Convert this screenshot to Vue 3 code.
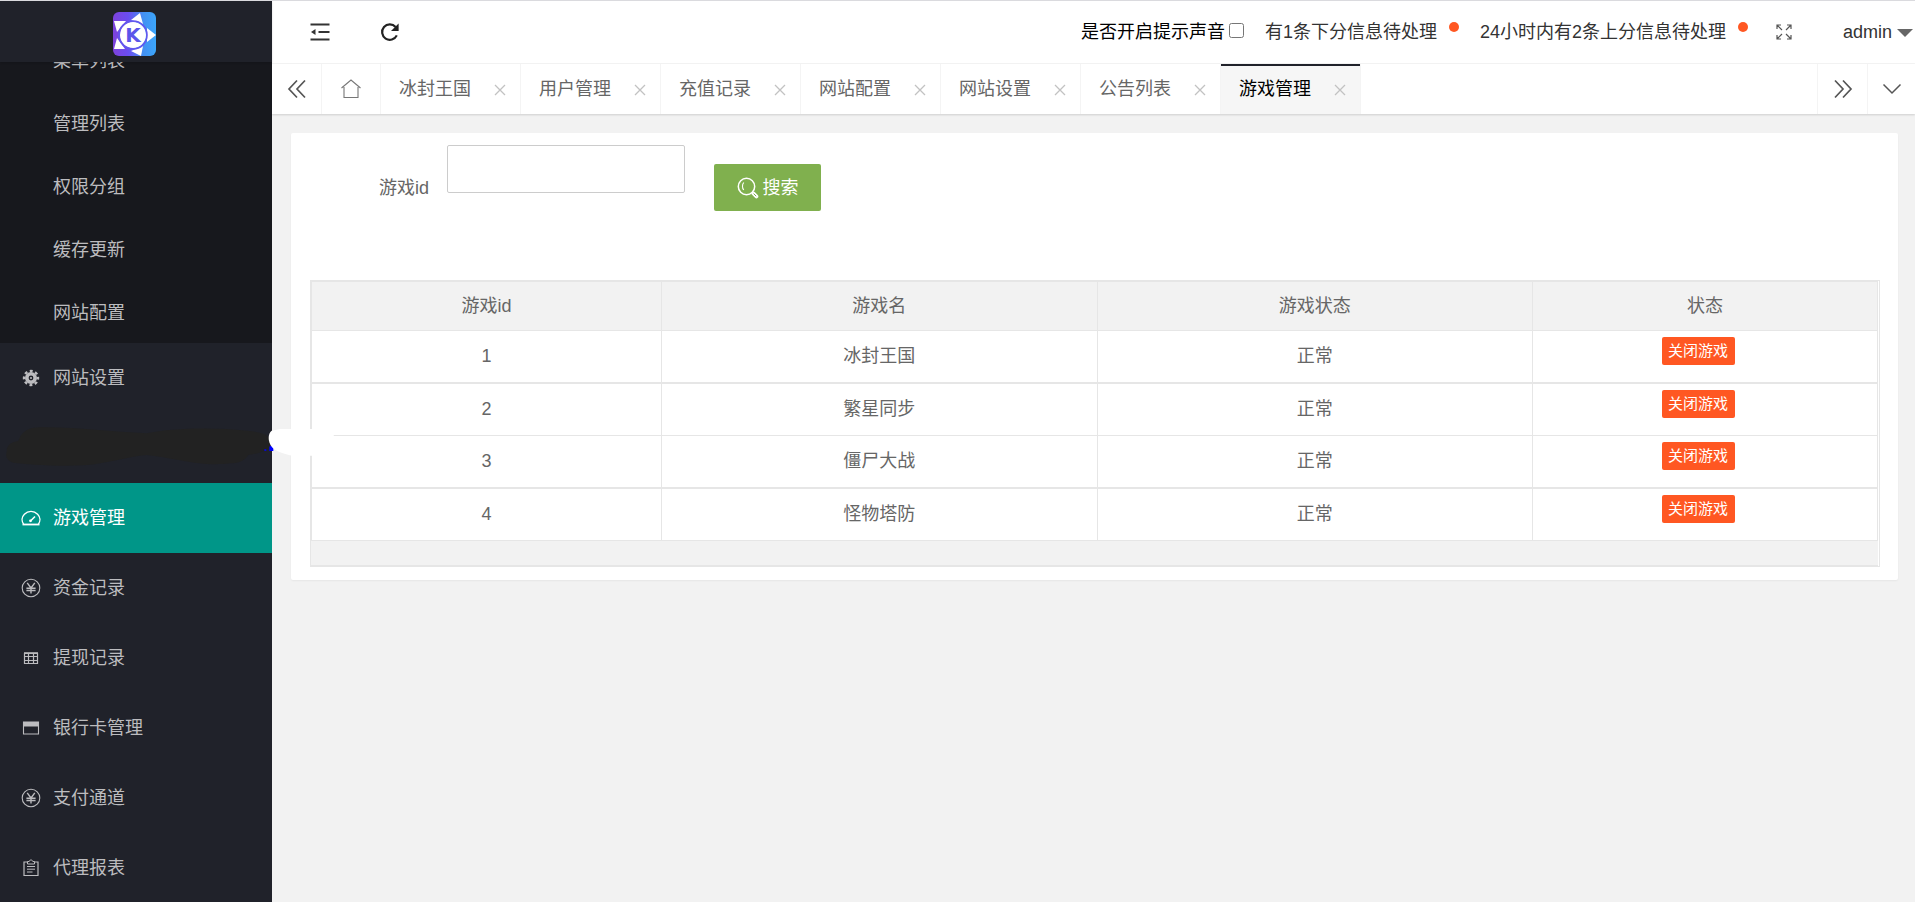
<script setup>
import { ref } from 'vue'

const subItems = ['菜单列表', '管理列表', '权限分组', '缓存更新', '网站配置']

const navItems = [
  { label: '网站设置', icon: 'gear' },
  { label: '', icon: 'blank' },
  { label: '游戏管理', icon: 'gauge', active: true },
  { label: '资金记录', icon: 'yen' },
  { label: '提现记录', icon: 'grid' },
  { label: '银行卡管理', icon: 'card' },
  { label: '支付通道', icon: 'yen' },
  { label: '代理报表', icon: 'clipboard' },
]

const tabs = ['冰封王国', '用户管理', '充值记录', '网站配置', '网站设置', '公告列表', '游戏管理']
const activeTab = ref('游戏管理')

const games = [
  { id: 1, name: '冰封王国', state: '正常' },
  { id: 2, name: '繁星同步', state: '正常' },
  { id: 3, name: '僵尸大战', state: '正常' },
  { id: 4, name: '怪物塔防', state: '正常' },
]

const sound = ref(false)
const gameId = ref('')
</script>

<template>
  <div class="layout">
    <aside class="side">
      <div class="logo">
        <svg width="43" height="44" viewBox="0 0 43 44" aria-hidden="true">
          <defs>
            <linearGradient id="logoFill" x1="0" y1="0" x2="1" y2="0">
              <stop offset="0" stop-color="#7d42dc" />
              <stop offset="0.35" stop-color="#6b4df0" />
              <stop offset="0.7" stop-color="#4390f2" />
              <stop offset="1" stop-color="#3ba6fa" />
            </linearGradient>
          </defs>
          <rect width="43" height="44" rx="6" fill="url(#logoFill)" />
          <g fill="#fff">
            <circle cx="20" cy="23" r="13" />
            <path d="M27 1L30 12L18 8Z" />
            <path d="M43 23L34 30V16Z" />
            <path d="M28 44L18 39L30 34Z" />
            <path d="M1 9L13 9L4 20Z" />
            <path d="M1 37L4 26L12 37Z" />
          </g>
          <circle cx="20" cy="23" r="14" fill="none" stroke="#6257ee" stroke-width="1.6" />
          <text x="20" y="30" text-anchor="middle" class="logo-letter">K</text>
        </svg>
      </div>
      <nav class="nav">
        <ul class="sub">
          <li v-for="item in subItems" :key="item"><a href="#">{{ item }}</a></li>
        </ul>
        <ul class="menu">
          <li v-for="(item, i) in navItems" :key="i" :class="{ active: item.active }">
            <svg v-if="item.icon === 'blank'" class="scribble" width="340" height="43" viewBox="0 255 1020 129" aria-hidden="true">
              <path fill="#222" d="M20 335C20 315 35 305 55 303C62 280 80 262 120 262C220 260 330 275 440 280C520 262 650 262 740 272C780 275 808 285 812 300C818 325 790 338 745 345C735 360 720 370 690 370C600 380 560 360 440 345C380 350 330 370 250 376C160 380 80 372 40 368C20 362 16 350 20 335Z" />
              <path fill="#00f" d="M793 328h6v4h-6zM808 320l6-4 6 8v9h-12z" />
              <path fill="#fff" d="M840 267H985C1010 275 1010 330 985 347H880C850 343 825 332 815 320C803 305 803 280 815 272Z" />
            </svg>
            <a v-else href="#">
              <svg class="ico" width="20" height="20" viewBox="0 0 20 20" fill="none" stroke="currentColor" aria-hidden="true">
                <template v-if="item.icon === 'gear'">
                  <circle cx="10" cy="10" r="4.2" stroke-width="3.6" />
                  <circle cx="10" cy="10" r="7" stroke-width="2.4" stroke-dasharray="2.9 2.6" stroke-dashoffset="1.45" />
                  <circle cx="10" cy="10" r="1" fill="currentColor" stroke="none" />
                </template>
                <template v-else-if="item.icon === 'gauge'">
                  <path stroke-width="1.4" d="M2.6 16C0.4 13 0.6 9 3.4 6.2A9.2 9.2 0 0 1 16.6 6.2C19.4 9 19.6 13 17.4 16" />
                  <path stroke-width="1.8" d="M1.5 16.5H18.5" />
                  <path stroke-width="1.6" d="M9.5 13L14 8.5" />
                  <circle cx="9.5" cy="12.8" r="1.4" fill="currentColor" stroke="none" />
                </template>
                <template v-else-if="item.icon === 'yen'">
                  <circle cx="10" cy="10" r="8.8" stroke-width="1.1" />
                  <path stroke-width="1.4" d="M6.2 4.8L10 10L13.8 4.8M10 10V15.6M5.4 10.2H14.6M5.4 12.5H14.6" />
                </template>
                <template v-else-if="item.icon === 'grid'">
                  <path stroke-width="1.2" d="M3.5 5.5H16.5V15.5H3.5ZM3.5 8.5H16.5M3.5 12.5H16.5M7.5 5.5V15.5M12.5 5.5V15.5" />
                  <path stroke-width="1.6" d="M3 5H17" />
                </template>
                <template v-else-if="item.icon === 'card'">
                  <path stroke-width="1.1" d="M2.5 4H17.5V16H2.5Z" />
                  <path fill="currentColor" stroke="none" d="M2 4H18V8.5H2Z" />
                </template>
                <template v-else>
                  <path stroke-width="1.2" d="M6.5 4H3V17.5H17V4H13.5" />
                  <path stroke-width="1" d="M6.5 3.5H8.2C8.4 1.5 11.6 1.5 11.8 3.5H13.5V6H6.5ZM6 8.5H14M6 11.2H14M6 14H11.5" />
                </template>
              </svg>
              <span>{{ item.label }}</span>
            </a>
          </li>
        </ul>
      </nav>
    </aside>

    <div class="main">
      <header class="top">
        <button class="plain" type="button" aria-label="收起菜单">
          <svg width="20" height="20" viewBox="0 0 20 20" fill="none" stroke="#333" stroke-width="2" aria-hidden="true">
            <path d="M0.5 2.5H19.5M8.5 10H19.5M0.5 17.5H19.5" />
            <path fill="#333" stroke="none" d="M1 10L5.5 7V13Z" />
          </svg>
        </button>
        <button class="plain" type="button" aria-label="刷新">
          <svg width="20" height="20" viewBox="0 0 20 20" fill="none" stroke="#222" stroke-width="2.2" aria-hidden="true">
            <path d="M16.8 13.4A7.7 7.7 0 1 1 15.6 5" />
            <path fill="#222" stroke="none" d="M18.6 1.4V9H11Z" />
          </svg>
        </button>
        <div class="top-right">
          <label class="sound">是否开启提示声音<input v-model="sound" type="checkbox" /></label>
          <a href="#" class="notice">有1条下分信息待处理<i class="dot"></i></a>
          <a href="#" class="notice">24小时内有2条上分信息待处理<i class="dot"></i></a>
          <button class="plain full" type="button" aria-label="全屏">
            <svg width="16" height="16" viewBox="0 0 16 16" fill="none" stroke="#555" stroke-width="1.2" aria-hidden="true">
              <path d="M1 5V1H5M1 1L6 6M11 1H15V5M15 1L10 6M1 11V15H5M1 15L6 10M15 11V15H11M15 15L10 10" />
            </svg>
          </button>
          <a href="#" class="user">admin<i class="caret"></i></a>
        </div>
      </header>

      <div class="tabs">
        <button class="ctl" type="button" aria-label="向左">
          <svg width="20" height="20" viewBox="0 0 20 20" fill="none" stroke="#555" stroke-width="1.7" aria-hidden="true">
            <path d="M10 1.5L2 10L10 18.5M18 1.5L10 10L18 18.5" />
          </svg>
        </button>
        <button class="ctl home" type="button" aria-label="主页">
          <svg width="20" height="20" viewBox="0 0 20 20" fill="none" stroke="#777" stroke-width="1.1" aria-hidden="true">
            <path d="M0.5 9L10 1L19.5 9M3 8V18.5H17V8" />
          </svg>
        </button>
        <div v-for="tab in tabs" :key="tab" class="tab" :class="{ on: tab === activeTab }">
          <button class="tab-name" type="button" @click="activeTab = tab">{{ tab }}</button>
          <button class="tab-close" type="button" aria-label="关闭">
            <svg width="12" height="12" viewBox="0 0 12 12" fill="none" stroke="#c2c2c2" stroke-width="1.3" aria-hidden="true">
              <path d="M1 1L11 11M11 1L1 11" />
            </svg>
          </button>
        </div>
        <div class="tabs-end">
          <button class="ctl" type="button" aria-label="向右">
            <svg width="20" height="20" viewBox="0 0 20 20" fill="none" stroke="#555" stroke-width="1.7" aria-hidden="true">
              <path d="M2 1.5L10 10L2 18.5M10 1.5L18 10L10 18.5" />
            </svg>
          </button>
          <button class="ctl more" type="button" aria-label="更多">
            <svg width="20" height="20" viewBox="0 0 20 20" fill="none" stroke="#555" stroke-width="1.5" aria-hidden="true">
              <path d="M1.5 5.5L10 14L18.5 5.5" />
            </svg>
          </button>
        </div>
      </div>

      <main class="card">
        <form class="search" @submit.prevent>
          <label for="game-id">游戏id</label>
          <input id="game-id" v-model="gameId" type="text" />
          <button class="find" type="submit">
            <svg width="22" height="22" viewBox="0 0 22 22" fill="none" stroke="#fff" aria-hidden="true">
              <circle cx="9.5" cy="9.5" r="8.2" stroke-width="1.5" />
              <path stroke-width="1.1" d="M6.8 5.5C5 7.5 5 11 6.8 13" />
              <path stroke-width="3.8" stroke-linecap="round" d="M16.4 16.4L19.4 19.4" />
              <path stroke="#80b04e" stroke-width="1" d="M16.6 16.6L19.2 19.2" />
            </svg>
            <span>搜索</span>
          </button>
        </form>
        <div class="table-box">
          <table>
            <colgroup>
              <col class="c-id" />
              <col />
              <col />
              <col class="c-act" />
            </colgroup>
            <thead>
              <tr><th>游戏id</th><th>游戏名</th><th>游戏状态</th><th>状态</th></tr>
            </thead>
            <tbody>
              <tr v-for="g in games" :key="g.id">
                <td>{{ g.id }}</td>
                <td>{{ g.name }}</td>
                <td>{{ g.state }}</td>
                <td class="act"><button class="shut" type="button">关闭游戏</button></td>
              </tr>
            </tbody>
          </table>
          <div class="foot"></div>
        </div>
      </main>
    </div>
  </div>
</template>

<style>
body {
  margin: 0;
  background: #f2f2f2;
}
</style>

<style scoped>
.layout,
.layout * {
  box-sizing: border-box;
}
.layout {
  display: flex;
  height: 100vh;
  overflow: hidden;
  border-top: 1px solid #dadade;
  background: #f2f2f2;
  color: #666;
  font: 18px/24px "Liberation Sans", "Noto Sans CJK SC", sans-serif;
}
button {
  padding: 0;
  border: 0;
  background: none;
  color: inherit;
  font: inherit;
  cursor: pointer;
}
a {
  color: inherit;
  text-decoration: none;
}
ul {
  margin: 0;
  padding: 0;
  list-style: none;
}
svg {
  display: block;
  flex: none;
}

/* sidebar */
.side {
  position: relative;
  z-index: 2;
  flex: none;
  width: 272px;
  background: #20222a;
  color: #bcbcbf;
}
.logo {
  position: relative;
  z-index: 1;
  display: flex;
  justify-content: center;
  height: 61px;
  padding: 11px 3px 0 0;
  background: #20222a;
  box-shadow: 0 1px 2px rgba(0, 0, 0, 0.15);
}
.logo-letter {
  fill: #5a55ea;
  font: bold 20px "DejaVu Sans", sans-serif;
}
.nav {
  margin-top: -34px;
}
.sub {
  background: #17181d;
}
.sub a {
  display: block;
  padding: 3px 0 0 53px;
  line-height: 60px;
}
.menu li {
  position: relative;
  height: 70px;
}
.menu a {
  display: flex;
  align-items: center;
  gap: 12px;
  height: 70px;
  padding-left: 21px;
}
.menu .active {
  background: #009688;
  color: #fff;
}
.scribble {
  position: absolute;
  top: 12px;
  left: 0;
}

/* header */
.main {
  flex: 1;
  min-width: 0;
}
.top {
  display: flex;
  align-items: center;
  gap: 50px;
  height: 63px;
  padding: 0 2px 0 38px;
  border-bottom: 1px solid #f4f4f4;
  background: #fff;
  color: #333;
}
.top-right {
  display: flex;
  align-items: center;
  margin-left: auto;
  white-space: nowrap;
}
.sound {
  display: flex;
  align-items: center;
  color: #000;
}
.sound input {
  width: 15px;
  height: 15px;
  margin: 0 0 4px 4px;
}
.notice {
  display: flex;
  align-items: center;
  margin-left: 21px;
}
.dot {
  width: 10px;
  height: 10px;
  margin: 0 0 10px 12px;
  border-radius: 50%;
  background: #ff5722;
}
.full {
  margin-left: 28px;
}
.user {
  display: flex;
  align-items: center;
  margin-left: 51px;
}
.caret {
  margin: 2px 0 0 5px;
  border: 8px solid transparent;
  border-top-color: #666;
  border-bottom: 0;
}

/* tab strip */
.tabs {
  display: flex;
  height: 50px;
  background: #fff;
  box-shadow: 0 1px 2px rgba(0, 0, 0, 0.15);
}
.ctl {
  display: flex;
  flex: none;
  align-items: center;
  justify-content: center;
  width: 50px;
  border-right: 1px solid #f4f4f4;
}
.home {
  width: 59px;
}
.tab {
  display: flex;
  flex: none;
  align-items: center;
  justify-content: space-between;
  width: 140px;
  padding: 0 14px 0 18px;
  border-right: 1px solid #f4f4f4;
}
.on {
  background: linear-gradient(#20222a 2px, #f6f6f6 2px);
}
.on .tab-name {
  color: #000;
}
.tab-close {
  padding-top: 1px;
}
.tabs-end {
  display: flex;
  margin-left: auto;
}
.tabs-end .ctl {
  border-right: 0;
  border-left: 1px solid #f4f4f4;
}
.tabs-end .more {
  width: 48px;
}

/* content */
.card {
  margin: 19px 17px 0 19px;
  padding: 12px 18px 13px 19px;
  border-radius: 2px;
  background: #fff;
  box-shadow: 0 1px 2px rgba(0, 0, 0, 0.05);
}
.search {
  display: flex;
  align-items: flex-end;
  height: 66px;
  padding-left: 69px;
}
.search label {
  line-height: 46px;
}
.search input {
  align-self: flex-start;
  width: 238px;
  height: 48px;
  margin: 0 29px 0 18px;
  padding: 0 12px;
  border: 1px solid #ccc;
  border-radius: 2px;
  background: #fff;
  font: inherit;
}
.find {
  display: flex;
  align-items: center;
  justify-content: center;
  gap: 4px;
  width: 107px;
  height: 47px;
  border-radius: 2px;
  background: #80b04e;
  color: #fff;
}
.table-box {
  margin-top: 69px;
  padding-right: 1px;
  border: 1px solid #e6e6e6;
}
table {
  width: 100%;
  border: solid #e6e6e6;
  border-width: 1px 0 0 1px;
  border-spacing: 0;
  table-layout: fixed;
}
.c-id {
  width: 350px;
}
.c-act {
  width: 345px;
}
th,
td {
  padding: 0;
  border: solid #e6e6e6;
  border-width: 0 1px 1px 0;
  text-align: center;
  font-weight: 400;
}
th {
  height: 49px;
  background: #f2f2f2;
}
td {
  height: 52px;
  padding-bottom: 2px;
}
tr:nth-child(odd) td {
  height: 53px;
  border-bottom-width: 2px;
}
.act {
  padding: 6px 14px 0 0;
  vertical-align: top;
}
.shut {
  display: block;
  width: 73px;
  height: 28px;
  margin: 0 auto;
  border-radius: 2px;
  background: #ff5722;
  color: #fff;
  font-size: 15px;
  line-height: 28px;
}
.foot {
  height: 25px;
  border-bottom: 1px solid #e6e6e6;
  background: #f2f2f2;
}
</style>
